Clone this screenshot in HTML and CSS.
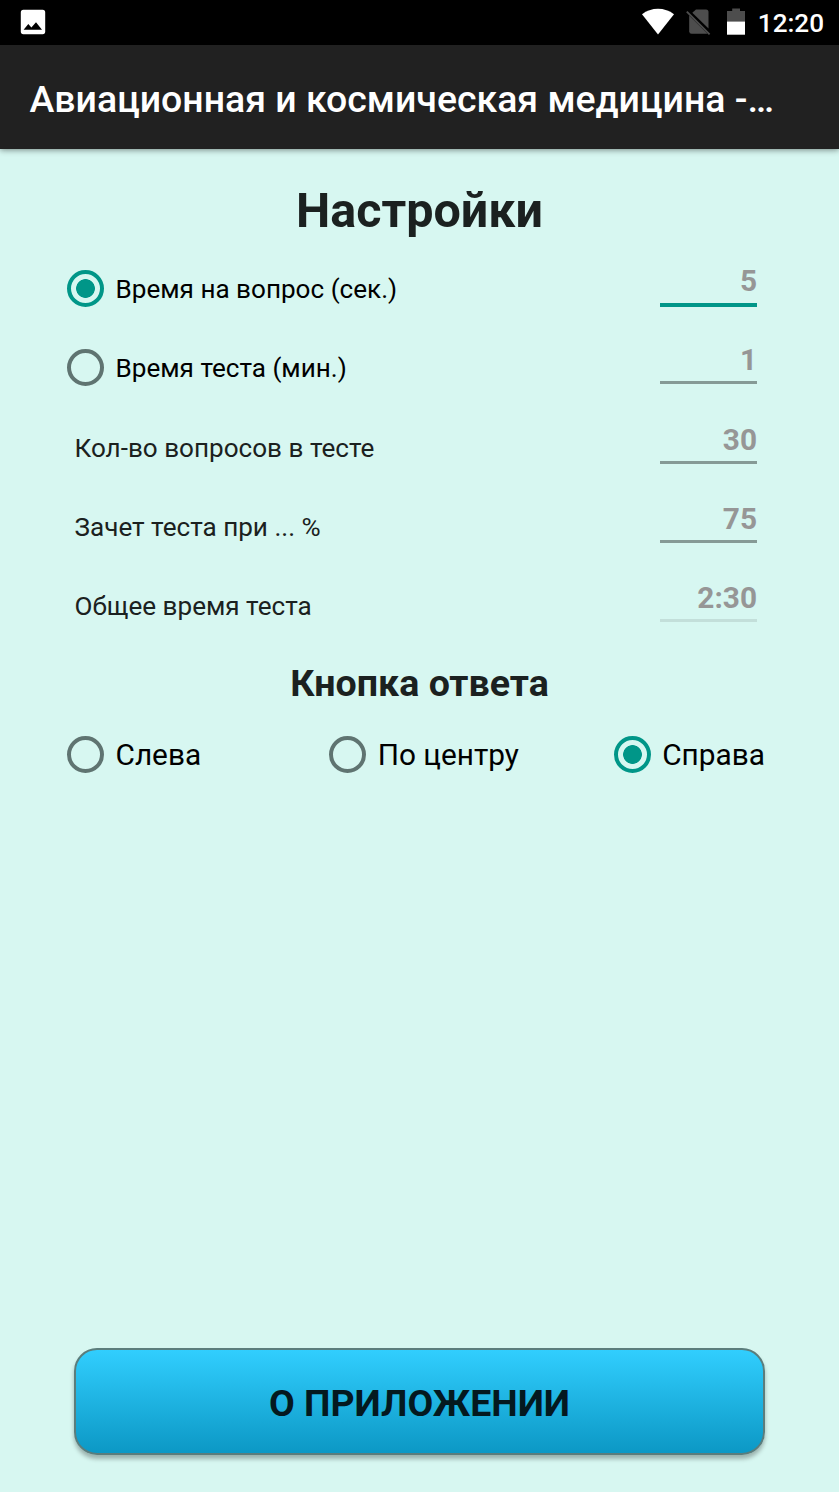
FILE: index.html
```html
<!DOCTYPE html>
<html lang="ru">
<head>
  <meta charset="UTF-8">
  <meta name="viewport" content="width=device-width, initial-scale=1.0">
  <title>Настройки</title>
  <link rel="stylesheet" href="styles.css">
</head>
<body>
  <div class="status-bar">
    <svg class="icon-picture" width="26" height="26" viewBox="0 0 26 26">
      <rect x="0.8" y="0.8" width="24.4" height="24.4" rx="2.6" fill="#fff"/>
      <path d="M3.6 20.8 L8.3 15 L11.4 18.5 L16 13.2 L22 20.8 Z" fill="#000"/>
    </svg>
    <div class="status-icons">
      <svg class="icon-wifi" width="34" height="28" viewBox="0 0 34 28">
        <path d="M1 6.2 C10 -1.2 24 -1.2 33 6.2 L17 26.5 Z" fill="#fff"/>
      </svg>
      <svg class="icon-sim" width="25" height="28" viewBox="0 0 25 28">
        <path d="M10 1.5 H20 Q22.5 1.5 22.5 4 V20.5 L6.3 4.8 Z" fill="#4d4d4d"/>
        <path d="M3.2 7.5 L21.3 25.4 Q20.8 25.8 20 25.8 H5.6 Q3.2 25.8 3.2 23.3 Z" fill="#4d4d4d"/>
        <path d="M0.8 3.6 L23.6 26.4" stroke="#4d4d4d" stroke-width="1.9"/>
      </svg>
      <svg class="icon-battery" width="18" height="28" viewBox="0 0 18 28">
        <path d="M5.2 0.5 H13 V3 H18 V14 H0 V3 H5.2 Z" fill="#4d4d4d"/>
        <rect x="0" y="13.6" width="18" height="13.1" fill="#fff"/>
      </svg>
      <span class="clock">12:20</span>
    </div>
  </div>

  <header class="toolbar">Авиационная и космическая медицина -…</header>

  <main class="content">
    <h1>Настройки</h1>

    <div class="row">
      <label class="option"><input type="radio" name="mode" checked>Время на вопрос (сек.)</label>
      <div class="value focused">5</div>
    </div>
    <div class="row">
      <label class="option"><input type="radio" name="mode">Время теста (мин.)</label>
      <div class="value">1</div>
    </div>
    <div class="row">
      <span class="caption">Кол-во вопросов в тесте</span>
      <div class="value">30</div>
    </div>
    <div class="row">
      <span class="caption">Зачет теста при ... %</span>
      <div class="value">75</div>
    </div>
    <div class="row">
      <span class="caption">Общее время теста</span>
      <div class="value disabled">2:30</div>
    </div>

    <h2>Кнопка ответа</h2>
    <div class="answer-side">
      <label class="option"><input type="radio" name="side">Слева</label>
      <label class="option"><input type="radio" name="side">По центру</label>
      <label class="option"><input type="radio" name="side" checked>Справа</label>
    </div>

    <button class="about">О ПРИЛОЖЕНИИ</button>
  </main>
</body>
</html>
```
FILE: styles.css
```css
* {
  box-sizing: border-box;
}
body {
  font-family: Roboto, sans-serif;
  margin: 0;
  height: 1492px;
  display: flex;
  flex-direction: column;
  background-color: #d7f7f1;
  overflow: hidden;
}
.status-bar {
  height: 45px;
  padding: 0 15px 1px 20px;
  display: flex;
  justify-content: space-between;
  align-items: center;
  background: #000;
}
.status-icons {
  display: flex;
  align-items: center;
}
.status-icons svg {
  display: block;
}
.icon-sim {
  margin-left: 11px;
}
.icon-battery {
  margin-left: 16px;
}
.clock {
  margin-left: 13px;
  padding-top: 2px;
  font-size: 26.1px;
  line-height: 30px;
  font-weight: 500;
  color: #fff;
}
.toolbar {
  height: 104px;
  padding: 5px 29.5px 0;
  font-size: 37.45px;
  font-weight: 500;
  line-height: 99px;
  white-space: nowrap;
  color: #fff;
  background: #212121;
  box-shadow: 0 1px 6px rgba(0, 0, 0, 0.45);
}
.content {
  flex: 1;
  display: flex;
  flex-direction: column;
  padding: 32px 74px 37px;
}
h1 {
  margin: 0 0 8px;
  font-size: 48.5px;
  line-height: 60px;
  text-align: center;
  color: #1b2120;
}
.row {
  height: 79.3px;
  display: flex;
  justify-content: space-between;
  align-items: flex-start;
  font-size: 26.1px;
}
.option {
  display: flex;
  align-items: center;
  height: 80px;
  line-height: 30px;
  color: #000;
}
.row .option {
  margin-left: -7px;
}
.option input {
  appearance: none;
  flex: none;
  width: 37px;
  height: 37px;
  margin: 0 11.5px 2px 0;
  border: 4px solid #5f7471;
  border-radius: 50%;
}
.option input:checked {
  border-color: #009688;
  background: radial-gradient(circle, #009688 9px, transparent 9.7px);
}
.caption {
  line-height: 81px;
  color: #1b2120;
  margin-left: 0.5px;
}
.value {
  width: 97px;
  height: 40px;
  margin: 16px 8px 0 0;
  border-bottom: 3px solid #869a96;
  font-size: 29.8px;
  font-weight: bold;
  line-height: 32px;
  text-align: right;
  color: #969696;
}
.value.focused {
  height: 42px;
  border-bottom: 4px solid #009688;
}
.value.disabled {
  border-bottom-color: #c3dfda;
}
h2 {
  margin: 8px 0 0;
  font-size: 37.6px;
  line-height: 60px;
  text-align: center;
  color: #1b2120;
}
.answer-side {
  display: flex;
  margin: 2px 0 0 -7px;
  font-size: 29.8px;
}
.answer-side .option:nth-child(2) {
  margin: 0 auto 0 128px;
}
.about {
  height: 107px;
  margin-top: auto;
  padding: 2px 0 0;
  border: 2px solid #5b7d7c;
  border-radius: 23px;
  background: linear-gradient(#31cefe, #0c98c5);
  box-shadow: 0 4px 4px rgba(0, 0, 0, 0.28);
  font-family: inherit;
  font-size: 37.4px;
  font-weight: bold;
  color: #04191f;
}
```
